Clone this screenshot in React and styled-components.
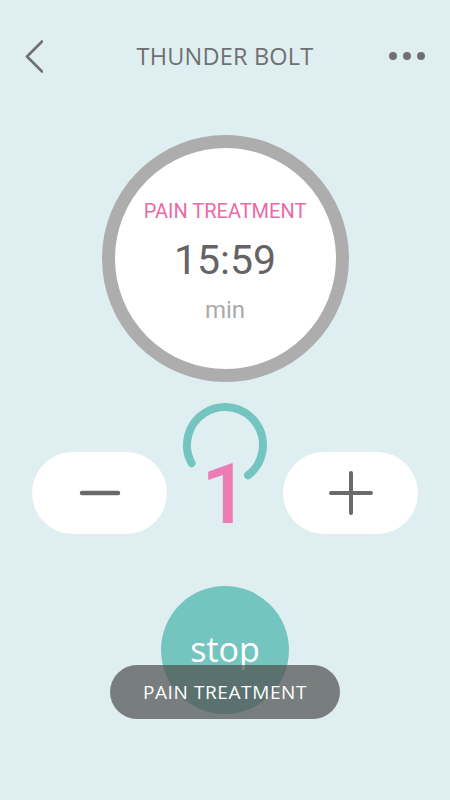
import React from "react";
import styled, { createGlobalStyle } from "styled-components";

const Global = createGlobalStyle`
  html, body { margin: 0; padding: 0; background: #dfeff1; }
  body { width: 450px; height: 800px; overflow: hidden; }
`;

const Page = styled.div`
  width: 450px;
  height: 800px;
  background: #dfeff1;
  display: flex;
  flex-direction: column;
  align-items: center;
  font-family: "Open Sans", "Liberation Sans", sans-serif;
`;

const Header = styled.header`
  width: 100%;
  box-sizing: border-box;
  height: 112px;
  padding: 0 25px 0 25px;
  display: grid;
  grid-template-columns: 40px 1fr 40px;
  align-items: center;
`;

const IconButton = styled.button`
  border: 0;
  background: none;
  padding: 0;
  display: flex;
  align-items: center;
  justify-content: ${(p) => p.$align || "flex-start"};
  color: #707070;
`;

const Title = styled.h1`
  margin: 0;
  text-align: center;
  font-family: "Open Sans", sans-serif;
  font-weight: 400;
  font-size: 23.5px;
  color: #707070;
  letter-spacing: 0.2px;
`;

const Timer = styled.div`
  margin-top: 23px;
  width: 247px;
  height: 247px;
  box-sizing: border-box;
  border-radius: 50%;
  border: 13px solid #adadad;
  background: #ffffff;
  display: flex;
  flex-direction: column;
  align-items: center;
  font-family: Roboto, "Liberation Sans", sans-serif;
`;

const Mode = styled.div`
  margin-top: 51px;
  font-size: 20px;
  line-height: 24px;
  color: #ea6aa8;
`;

const Time = styled.div`
  margin-top: 13px;
  font-size: 41px;
  line-height: 48px;
  color: #646464;
`;

const Unit = styled.div`
  margin-top: 12px;
  font-size: 24px;
  line-height: 28px;
  color: #a9a9a9;
`;

const Controls = styled.div`
  margin-top: 18px;
  display: flex;
  align-items: flex-end;
  height: 134px;
`;

const Pill = styled.button`
  width: 135px;
  height: 82px;
  border-radius: 41px;
  border: 0;
  background: #ffffff;
  display: flex;
  align-items: center;
  justify-content: center;
  padding: 0;
`;

const Level = styled.div`
  width: 116px;
  height: 134px;
  display: grid;
  justify-items: center;
  & > * { grid-area: 1 / 1; }
`;

const Digit = styled.div`
  margin-top: 53px;
  font-family: Roboto, sans-serif;
  font-weight: 500;
  font-size: 84px;
  line-height: 84px;
  color: #eb7db4;
`;

const StopWrap = styled.div`
  margin-top: 52px;
  position: relative;
  width: 128px;
  height: 128px;
`;

const StopButton = styled.button`
  width: 128px;
  height: 128px;
  border-radius: 50%;
  border: 0;
  padding: 0 0 2px 0;
  background: #74c5c0;
  color: #ffffff;
  font-family: "Open Sans", sans-serif;
  font-size: 34px;
  line-height: 1;
  display: flex;
  align-items: center;
  justify-content: center;
`;

const Toast = styled.div`
  position: absolute;
  left: 50%;
  top: 79px;
  transform: translateX(-50%);
  width: 230px;
  height: 54px;
  border-radius: 27px;
  background: rgba(80, 80, 80, 0.72);
  color: #ffffff;
  font-family: "Open Sans", sans-serif;
  font-size: 19px;
  letter-spacing: 0.6px;
  display: flex;
  align-items: center;
  justify-content: center;
  white-space: nowrap;
`;

export default function App() {
  return (
    <>
      <Global />
      <Page>
        <Header>
          <IconButton aria-label="back">
            <svg width="18" height="33" viewBox="0 0 18 33">
              <path d="M17 1.5 L2 16.5 L17 31.5" fill="none" stroke="#707070" strokeWidth="2.6" strokeLinecap="round" strokeLinejoin="round" />
            </svg>
          </IconButton>
          <Title>THUNDER BOLT</Title>
          <IconButton $align="flex-end" aria-label="more">
            <svg width="36" height="10" viewBox="0 0 36 10">
              <circle cx="4" cy="5" r="4" fill="#707070" />
              <circle cx="18" cy="5" r="4" fill="#707070" />
              <circle cx="32" cy="5" r="4" fill="#707070" />
            </svg>
          </IconButton>
        </Header>

        <Timer>
          <Mode>PAIN TREATMENT</Mode>
          <Time>15:59</Time>
          <Unit>min</Unit>
        </Timer>

        <Controls>
          <Pill aria-label="decrease">
            <svg width="42" height="8" viewBox="0 0 42 8">
              <path d="M3 4 H39" stroke="#6a6a6a" strokeWidth="4.5" strokeLinecap="round" />
            </svg>
          </Pill>
          <Level>
            <svg width="90" height="90" viewBox="0 0 90 90">
              <path d="M11.6 63.2 A38 38 0 1 1 68 75.3" fill="none" stroke="#74c5c0" strokeWidth="8" strokeLinecap="round" />
            </svg>
            <Digit>1</Digit>
          </Level>
          <Pill aria-label="increase">
            <svg width="44" height="44" viewBox="0 0 44 44">
              <path d="M2 22 H42 M22 2 V42" stroke="#6a6a6a" strokeWidth="4" strokeLinecap="round" />
            </svg>
          </Pill>
        </Controls>

        <StopWrap>
          <StopButton>stop</StopButton>
          <Toast>PAIN TREATMENT</Toast>
        </StopWrap>
      </Page>
    </>
  );
}
